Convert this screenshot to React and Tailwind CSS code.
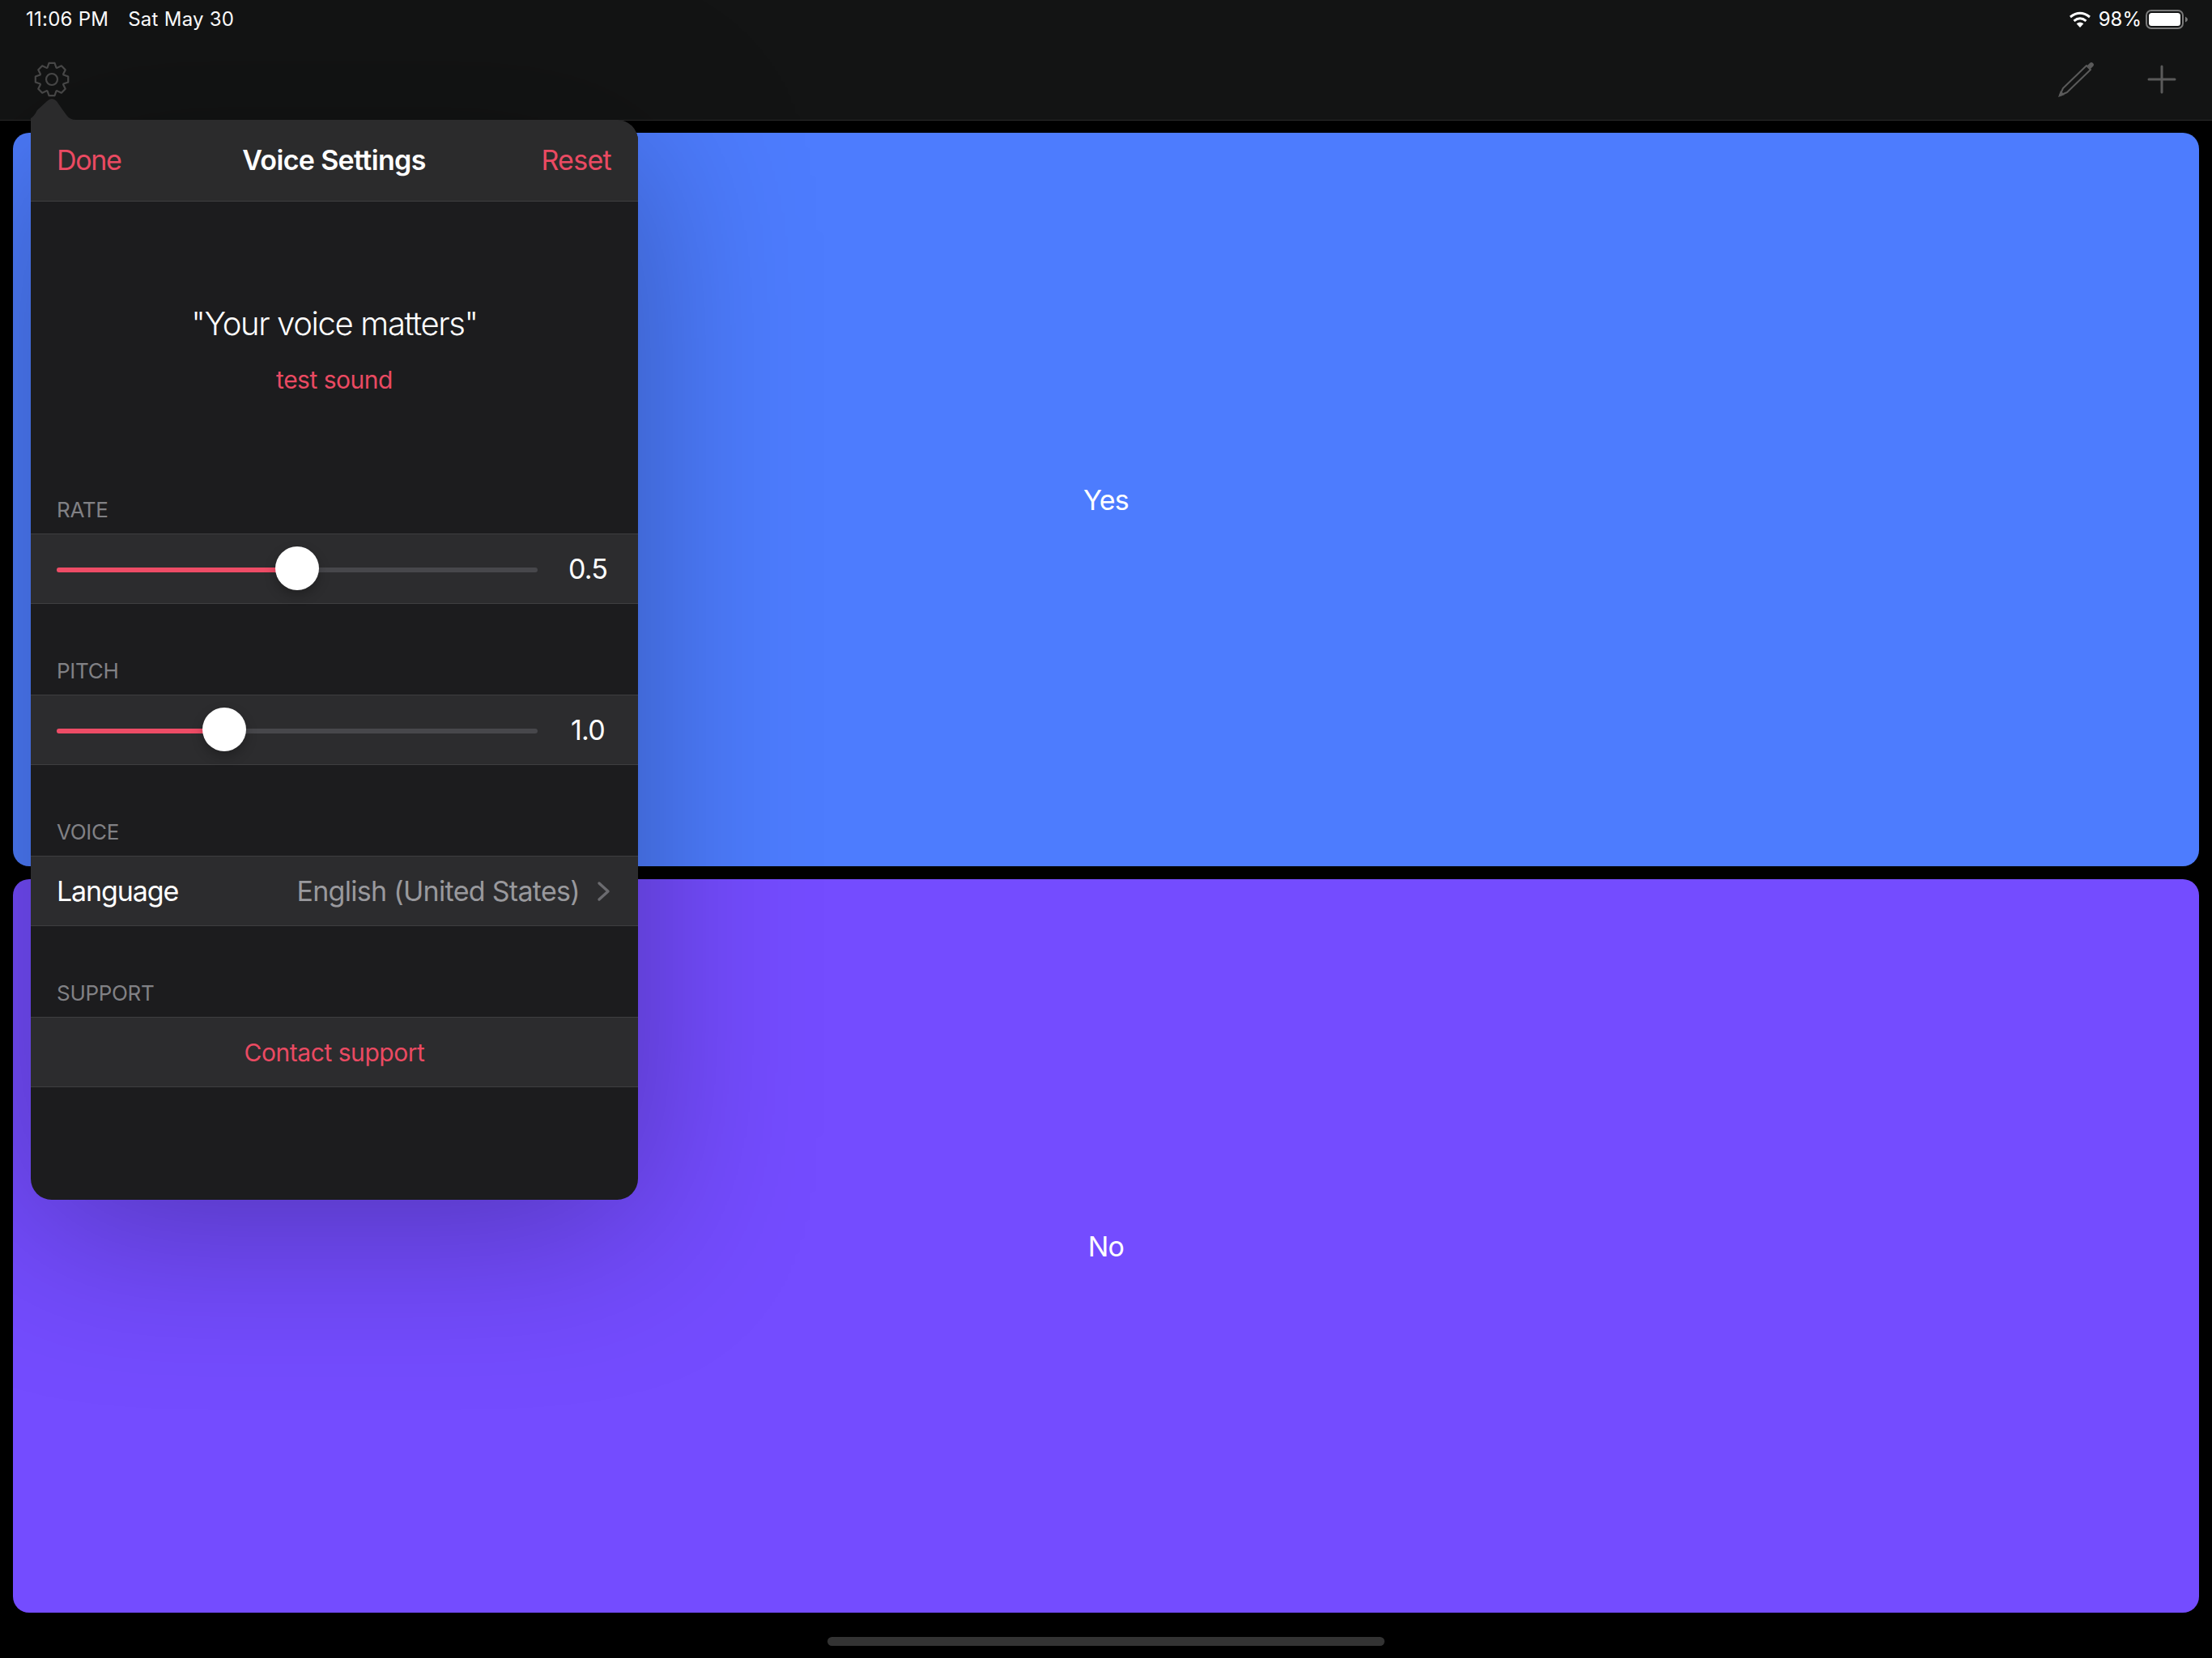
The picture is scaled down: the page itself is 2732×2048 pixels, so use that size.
const gearPath = () => {
  const pts = [];
  const c = 22, R = 20.5, r = 15.5;
  for (let i = 0; i < 8; i++) {
    const a = (i * Math.PI) / 4 - Math.PI / 2;
    const offs = [[-0.36, r], [-0.17, R], [0.17, R], [0.36, r]];
    offs.forEach(([d, rad]) => {
      const t = a + d;
      pts.push(`${(c + rad * Math.cos(t)).toFixed(2)},${(c + rad * Math.sin(t)).toFixed(2)}`);
    });
  }
  return "M" + pts.join("L") + "Z";
};

const Gear = () => (
  <svg width="44" height="44" viewBox="0 0 44 44" fill="none" stroke="#4a4a4a" strokeWidth="2.2" strokeLinejoin="round">
    <path d={gearPath()} />
    <circle cx="22" cy="22" r="7" />
  </svg>
);

const Pencil = () => (
  <svg width="46" height="46" viewBox="0 0 46 46" fill="none">
    <path d="M3 43 L7 34 L36 6 L41 11 L12 39 Z" stroke="#5a5a5a" strokeWidth="2" strokeLinejoin="round" />
    <path d="M1 45 L4 37 L9 42 Z" fill="#5a5a5a" />
    <path d="M37 6 L40 3 Q42 1 44 3 Q46 5 44 7 L41 10 Z" fill="#5a5a5a" />
  </svg>
);

const Plus = () => (
  <svg width="36" height="36" viewBox="0 0 36 36" fill="none" stroke="#5a5a5a" strokeWidth="3" strokeLinecap="round">
    <path d="M18 2V34M2 18H34" />
  </svg>
);

const Wifi = () => (
  <svg width="28" height="20" viewBox="0 0 28 20" fill="none">
    <path d="M14 20 L9.6 15.2 Q14 11.6 18.4 15.2 Z" fill="#fff" />
    <path d="M6.5 11.8 Q14 5.6 21.5 11.8" stroke="#fff" strokeWidth="3" />
    <path d="M2 7 Q14 -2.4 26 7" stroke="#fff" strokeWidth="3" />
  </svg>
);

const Battery = () => (
  <svg width="52" height="24" viewBox="0 0 52 24" fill="none">
    <rect x="1" y="1" width="45" height="22" rx="6" stroke="#7a7a7a" strokeWidth="2" />
    <rect x="4" y="4" width="39" height="16" rx="3.5" fill="#fff" />
    <path d="M49 8.5 Q52 10 52 12 Q52 14 49 15.5 Z" fill="#7a7a7a" />
  </svg>
);

const Chevron = () => (
  <svg width="17" height="26" viewBox="0 0 17 26" fill="none" stroke="#6b6b6f" strokeWidth="3.4" strokeLinecap="round" strokeLinejoin="round">
    <path d="M3 3L14 13L3 23" />
  </svg>
);

const Label = ({ children }) => (
  <div className="h-[112px] flex items-end pl-[32px] pb-[13px] text-[26px] leading-[32px] tracking-[-0.3px] text-[#818185]">{children}</div>
);

const Slider = ({ fill, value }) => (
  <div className="h-[87px] bg-[#2c2c2e] border-y border-[#3e3e40] flex items-center pl-[32px]">
    <div className="relative mt-[3px] w-[594px] h-[6px] rounded-full bg-[#47474b]">
      <div className="h-full rounded-l-full bg-[#ee4c66]" style={{ width: fill }} />
      <div
        className="absolute top-[-26px] w-[54px] h-[54px] rounded-full bg-white shadow-[0_6px_14px_rgba(0,0,0,0.25)]"
        style={{ left: fill - 27 }}
      />
    </div>
    <div className="flex-1 text-center text-[34px] leading-[40px] tracking-[-0.8px] text-white">{value}</div>
  </div>
);

export default function App() {
  return (
    <div className="relative w-[2732px] h-[2048px] overflow-hidden bg-black flex flex-col font-[Inter,sans-serif] text-white">
      <header className="h-[149px] bg-[#131414] border-b border-[#2a2a2a] flex flex-col">
        <div className="h-[48px] pl-[32px] pr-[30px] flex items-center justify-between text-[24px] leading-[48px]">
          <div className="flex gap-[24px] tracking-[0.25px]">
            <span>11:06 PM</span>
            <span>Sat May 30</span>
          </div>
          <div className="flex items-center">
            <Wifi />
            <span className="ml-[9px] mr-[5px]">98%</span>
            <Battery />
          </div>
        </div>
        <div className="flex-1 pl-[42px] pr-[44px] flex items-center justify-between">
          <Gear />
          <div className="flex items-center gap-[65px]">
            <Pencil />
            <Plus />
          </div>
        </div>
      </header>

      <main className="flex-1 px-[16px] pt-[15px] flex flex-col gap-[16px]">
        <div className="flex-1 rounded-[20px] bg-[#4d7cfe] flex items-center justify-center text-[34px] tracking-[-0.7px]">Yes</div>
        <div className="flex-1 rounded-[20px] bg-[#744cff] flex items-center justify-center text-[34px] tracking-[-0.7px]">No</div>
      </main>

      <footer className="h-[56px] pt-[30px] flex justify-center">
        <div className="w-[688px] h-[11px] rounded-full bg-[#333333]" />
      </footer>

      <div className="absolute left-[38px] top-[148px] w-[750px] h-[1334px] rounded-[26px] rounded-tl-none bg-[#1c1c1e] shadow-[0_30px_220px_rgba(0,0,0,0.3)]">
        <svg className="absolute left-0 top-[-26px]" width="70" height="42" viewBox="0 0 70 42" fill="#2b2b2c">
          <path d="M0 42 L0 24 Q4 22 8 14 L20 3 Q26 -3 32 3 Q38 12 44 20 Q48 26 56 26 L70 26 L70 42 Z" />
        </svg>
        <div className="relative h-[101px] bg-[#2b2b2c] border-b border-[#3e3e40] rounded-tr-[26px] pl-[32px] pr-[33px] grid grid-cols-3 items-center text-[34px] leading-[40px]">
          <span className="text-[#ea4a62] tracking-[-1.3px]">Done</span>
          <span className="text-center font-semibold whitespace-nowrap tracking-[-0.65px]">Voice Settings</span>
          <span className="text-right text-[#ea4a62] tracking-[-0.7px]">Reset</span>
        </div>
        <div className="h-[298px] pt-[127px] flex flex-col items-center">
          <div className="text-[40px] leading-[48px] font-[260] tracking-[-1.35px]">"Your voice matters"</div>
          <div className="mt-[27px] text-[30px] leading-[36px] tracking-[-0.5px] text-[#ea4a62]">test sound</div>
        </div>
        <Label>RATE</Label>
        <Slider fill={297} value="0.5" />
        <Label>PITCH</Label>
        <Slider fill={207} value="1.0" />
        <Label>VOICE</Label>
        <div className="h-[87px] bg-[#2c2c2e] border-y border-[#3e3e40] flex items-center justify-between pl-[32px] pr-[34px] text-[34px]">
          <span className="tracking-[-1.1px]">Language</span>
          <div className="flex items-center gap-[21px]">
            <span className="text-[#99999d] tracking-[-0.7px]">English (United States)</span>
            <Chevron />
          </div>
        </div>
        <Label>SUPPORT</Label>
        <div className="h-[87px] pt-[2px] bg-[#2c2c2e] border-y border-[#3e3e40] flex items-center justify-center text-[30px] tracking-[-0.45px] text-[#ea4a62]">
          Contact support
        </div>
      </div>
    </div>
  );
}
